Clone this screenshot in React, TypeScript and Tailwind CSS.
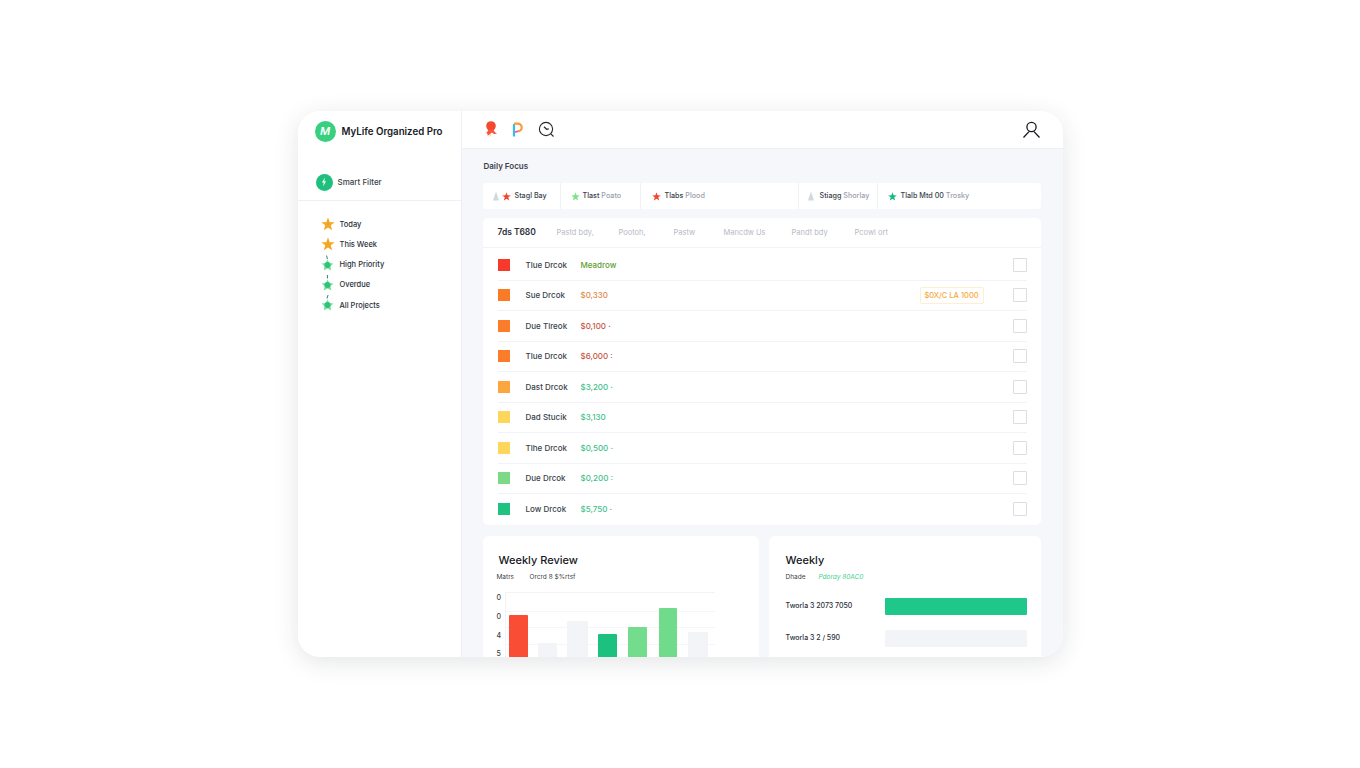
import React from "react";

const Star = ({ size = 14, color = "#f5a623", className = "" }: { size?: number; color?: string; className?: string }) => (
  <svg width={size} height={size} viewBox="0 0 24 24" className={`shrink-0 ${className}`}>
    <path d="M12 0.5l2.9 8.3 8.6.3-6.8 5.2 2.4 8.4L12 17.8l-7.1 4.9 2.4-8.4L.5 9.1l8.6-.3z" fill={color} />
  </svg>
);

const PinStar = ({ d }: { d: string }) => (
  <svg width="13" height="20" viewBox="0 0 13 20" className="shrink-0">
    <path d={d} stroke="#1f8f66" strokeWidth="1" fill="none" />
    <path d="M6.5 4.5l1.8 3.4 4.2.5-3 2.9.8 4.2-3.8-2-3.8 2 .8-4.2-3-2.9 4.2-.5z" fill="#7fe3a0" />
    <circle cx="6.5" cy="10" r="3" fill="#2fc27a" />
  </svg>
);

const TinyTower = () => (
  <svg width="8" height="10" viewBox="0 0 8 10" className="shrink-0">
    <path d="M4 0.5 L7 9.5 H1 Z" fill="#cfdadf" />
  </svg>
);

const nav = [
  { icon: "star", label: "Today", d: "" },
  { icon: "star", label: "This Week", d: "" },
  { icon: "pin", label: "High Priority", d: "M5.6 0.5L6.4 4" },
  { icon: "pin", label: "Overdue", d: "M6.4 -0.5V3.5" },
  { icon: "pin", label: "All Projects", d: "M7.2 -0.5L6 3.5" },
];

const rows = [
  { c: "#f6392b", name: "Tlue Drcok", val: "Meadrow", vc: "text-[#5f9e33]", tail: "" },
  { c: "#fb7a26", name: "Sue Drcok", val: "$0,330", vc: "text-[#e08a4a]", tail: "", badge: true },
  { c: "#fb7d2a", name: "Due Tlreok", val: "$0,100", vc: "text-[#c4553f]", tail: "·" },
  { c: "#fb7d2a", name: "Tlue Drcok", val: "$6,000", vc: "text-[#c4553f]", tail: ":" },
  { c: "#fca63f", name: "Dast Drcok", val: "$3,200", vc: "text-[#3fbf8a]", tail: "·" },
  { c: "#fdd65c", name: "Dad Stucik", val: "$3,130", vc: "text-[#3fbf8a]", tail: "" },
  { c: "#fdd65c", name: "Tlhe Drcok", val: "$0,500", vc: "text-[#3fbf8a]", tail: "·" },
  { c: "#7ed987", name: "Due Drcok", val: "$0,200", vc: "text-[#3fbf8a]", tail: ":" },
  { c: "#20c27f", name: "Low Drcok", val: "$5,750", vc: "text-[#3fbf8a]", tail: "·" },
];

const bars = [
  { c: "bg-[#f94d35]", w: "w-[19px]", ml: "ml-[3px]", mt: "mt-[22px]" },
  { c: "bg-[#f3f4f7]", w: "w-[19px]", ml: "ml-[10px]", mt: "mt-[50px]" },
  { c: "bg-[#f3f4f7]", w: "w-[21px]", ml: "ml-[10px]", mt: "mt-[28px]" },
  { c: "bg-[#1cc180]", w: "w-[19px]", ml: "ml-[10px]", mt: "mt-[41px]" },
  { c: "bg-[#74dd8d]", w: "w-[19px]", ml: "ml-[11px]", mt: "mt-[34px]" },
  { c: "bg-[#70db8b]", w: "w-[18px]", ml: "ml-[12px]", mt: "mt-[15px]" },
  { c: "bg-[#f3f4f7]", w: "w-[20px]", ml: "ml-[11px]", mt: "mt-[39px]" },
];

export default function App() {
  return (
    <div className="h-screen w-full bg-white flex items-center justify-center font-['Inter','Liberation_Sans',sans-serif] overflow-hidden">
      <div className="w-[765px] h-[546px] rounded-[22px] bg-white shadow-[0_5px_24px_rgba(30,40,60,0.12)] overflow-hidden flex">
        <aside className="w-[164px] shrink-0 border-r border-[#eef0f3] bg-white flex flex-col">
          <div className="h-[38px] mt-[2px] pl-[17px] flex items-center gap-[5px]">
            <div className="w-[21px] h-[21px] rounded-full bg-[#38cf7e] flex items-center justify-center shrink-0 -mt-[2px]">
              <span className="text-white text-[11px] font-semibold italic leading-none">M</span>
            </div>
            <span className="ml-[1px] text-[9.7px] font-semibold text-[#17191f] whitespace-nowrap">MyLife Organized Pro</span>
          </div>
          <div className="h-[37px] mt-[13px] pl-[18px] flex items-center gap-[5px] border-b border-[#eef0f3]">
            <div className="w-[17px] h-[17px] rounded-full bg-[#1fc07d] flex items-center justify-center shrink-0">
              <svg width="6" height="10" viewBox="0 0 6 10"><path d="M3.8 0.5L1 5.6h1.7L2.2 9.5 5 4.2H3.2z" fill="#fff" /></svg>
            </div>
            <span className="text-[8px] font-medium text-[#3a3f4a] whitespace-nowrap">Smart Filter</span>
          </div>
          <nav className="pt-[13px] pl-[23px] flex flex-col">
            {nav.map((n) => (
              <div key={n.label} className="h-[20.3px] flex items-center gap-[5px]">
                <div className="w-[14px] flex justify-center shrink-0">
                  {n.icon === "star" ? <Star size={14} /> : <PinStar d={n.d} />}
                </div>
                <span className="text-[7.5px] font-medium text-[#2c303a] whitespace-nowrap">{n.label}</span>
              </div>
            ))}
          </nav>
        </aside>

        <div className="flex-1 min-w-0 flex flex-col bg-[#f6f7fa]">
          <header className="h-[38px] shrink-0 bg-white border-b border-[#eef0f3] flex items-center pl-[22px] pr-[22px]">
            <div className="flex items-center gap-[14px]">
              <svg width="14" height="17" viewBox="0 0 14 17">
                <circle cx="7" cy="5" r="4.8" fill="#f4482f" />
                <path d="M4.5 8.5h5c.4 1.6 1.6 3 3.5 4.2l-3 .3-2.2-1.4-1.3 1.2-2.7 2-.8-3L1 12.8c1.8-1.2 3-2.6 3.5-4.3z" fill="#f4573c" />
                <path d="M5.5 15.5l1.5-2.2" stroke="#f9b090" strokeWidth="0.8" />
              </svg>
              <svg width="12" height="15" viewBox="0 0 12 15">
                <path d="M2 14.5V2" stroke="#35bde8" strokeWidth="2.2" fill="none" />
                <path d="M2 1.6h3.8a3.9 3.9 0 0 1 0 7.8" stroke="#f99a3d" strokeWidth="2.2" fill="none" />
                <path d="M3 10.2c1-.6 1.8-.8 3-.8" stroke="#ec5aa5" strokeWidth="1.8" fill="none" />
              </svg>
              <svg width="17" height="17" viewBox="0 0 17 17" fill="none" stroke="#25282e" strokeWidth="1.1">
                <circle cx="8" cy="8" r="6.6" />
                <path d="M12.8 12.8L15.5 15.5" />
                <path d="M6 5.8l2.6 2.5 2.2-.5" strokeWidth="1.2" />
              </svg>
            </div>
            <svg width="19" height="18" viewBox="0 0 19 18" fill="none" stroke="#15171c" strokeWidth="1.3" className="ml-auto">
              <circle cx="9.5" cy="6" r="4.6" />
              <path d="M1.5 16.5L7 10.6M17.5 16.5L12 10.6" />
            </svg>
          </header>

          <main className="flex-1 min-h-0 pl-[21px] pr-[22px] overflow-hidden">
            <h2 className="ml-[1px] text-[8px] font-semibold text-[#3a3f4a] mt-[12px] leading-[10px]">Daily Focus</h2>
            <div className="mt-[12px] h-[26px] rounded-[4px] bg-white flex items-center text-[7.2px] font-medium">
              <div className="w-[78px] h-full border-r border-[#f0f1f4] flex items-center pl-[9px] gap-[2px]">
                <TinyTower />
                <Star size={9} color="#f2452f" />
                <span className="ml-[2px] text-[#3a3f4a] whitespace-nowrap">Stagl Bay</span>
              </div>
              <div className="w-[80px] h-full border-r border-[#f0f1f4] flex items-center pl-[10px] gap-[3px]">
                <Star size={9} color="#7fe08a" />
                <span className="text-[#3a3f4a] whitespace-nowrap">Tlast <span className="text-[#9aa0ad]">Poato</span></span>
              </div>
              <div className="w-[158px] h-full border-r border-[#f0f1f4] flex items-center pl-[11px] gap-[4px]">
                <Star size={9} color="#f2452f" />
                <span className="text-[#3a3f4a] whitespace-nowrap">Tlabs <span className="text-[#9aa0ad]">Plood</span></span>
              </div>
              <div className="w-[79px] h-full border-r border-[#f0f1f4] flex items-center pl-[8px] gap-[5px]">
                <TinyTower />
                <span className="text-[#3a3f4a] whitespace-nowrap">Stiagg <span className="text-[#9aa0ad]">Shorlay</span></span>
              </div>
              <div className="flex-1 h-full flex items-center pl-[10px] gap-[4px]">
                <Star size={9} color="#13b981" />
                <span className="text-[#3a3f4a] whitespace-nowrap">Tlalb Mtd 00 <span className="text-[#9aa0ad]">Trosky</span></span>
              </div>
            </div>

            <section className="mt-[9px] h-[307px] rounded-[5px] bg-white">
              <div className="h-[30px] border-b border-[#f2f3f6] flex items-center pl-[15px] text-[7.5px] text-[#b6bac4] whitespace-nowrap">
                <span className="w-[59px] text-[8.5px] font-semibold text-[#2c303a]">7ds T680</span>
                <span className="w-[62px]">Pastd bdy,</span>
                <span className="w-[55px]">Pootoh,</span>
                <span className="w-[50px]">Pastw</span>
                <span className="w-[68px]">Mancdw Us</span>
                <span className="w-[63px]">Pandt bdy</span>
                <span>Pcowl ort</span>
              </div>
              <div className="pt-[2px]">
                {rows.map((r, i) => (
                  <div key={i} className={`h-[30.5px] ml-[15px] mr-[14px] flex items-center ${i < rows.length - 1 ? "border-b border-[#f2f3f6]" : ""}`}>
                    <div className="w-[12px] h-[12px] shrink-0" style={{ backgroundColor: r.c }} />
                    <span className="ml-[16px] w-[48px] text-[8px] font-medium text-[#3a3f4a] whitespace-nowrap">{r.name}</span>
                    <span className={`ml-[7px] text-[8px] font-medium ${r.vc} whitespace-nowrap`}>{r.val} {r.tail}</span>
                    {r.badge && (
                      <span className="ml-auto mr-[29px] w-[64px] h-[17px] border border-[#fcefd2] rounded-[2px] text-[7.5px] font-medium text-[#f5a93a] flex items-center justify-center whitespace-nowrap">$0X/C LA 1000</span>
                    )}
                    <div className={`${r.badge ? "" : "ml-auto"} w-[14px] h-[14px] border border-[#dcdee2] rounded-[1px] shrink-0`} />
                  </div>
                ))}
              </div>
            </section>

            <div className="mt-[11px] flex gap-[10px]">
              <section className="w-[276px] h-[140px] rounded-[6px] bg-white pl-[16px] pt-[16px]">
                <h3 className="text-[11px] font-medium text-[#17191f] leading-[16px]">Weekly Review</h3>
                <div className="mt-[5px] -ml-[2px] flex text-[6.5px] text-[#3a3f4a] leading-[9px] whitespace-nowrap">
                  <span className="w-[33px]">Matrs</span>
                  <span>Orcrd 8 $%rtsf</span>
                </div>
                <div className="mt-[10px] flex">
                  <div className="w-[6px] -ml-[2px] flex flex-col text-[7px] font-medium text-[#3a3f4a] leading-[19px] -mt-[4px]">
                    <span>0</span><span>0</span><span>4</span>
                    <span className="leading-[6px] mt-[6px]">5</span>
                  </div>
                  <div className="relative ml-[2px] w-[210px] h-[70px] border-t border-l border-[#f4f2f7]">
                    <div className="absolute inset-x-0 top-[18px] border-t border-[#f6f6f8]" />
                    <div className="absolute inset-x-0 top-[34px] border-t border-[#f6f6f8]" />
                    <div className="absolute inset-x-0 top-[51px] border-t border-[#f6f6f8]" />
                    <div className="relative flex items-start">
                      {bars.map((b, i) => (
                        <div key={i} className={`${b.w} ${b.ml} ${b.mt} ${b.c} h-[60px] rounded-t-[1px]`} />
                      ))}
                    </div>
                  </div>
                </div>
              </section>
              <section className="flex-1 h-[140px] rounded-[6px] bg-white pl-[17px] pr-[14px] pt-[16px]">
                <h3 className="text-[11px] font-medium text-[#17191f] leading-[16px]">Weekly</h3>
                <div className="mt-[5px] flex text-[6.5px] leading-[9px] whitespace-nowrap">
                  <span className="w-[33px] text-[#3a3f4a]">Dhade</span>
                  <span className="text-[#3fd18f] italic">Pdoray 80AC0</span>
                </div>
                <div className="mt-[16px] flex items-center h-[17px]">
                  <span className="w-[99px] text-[7px] font-medium text-[#2c303a] whitespace-nowrap">Tworla 3 2073 7050</span>
                  <div className="flex-1 h-[17px] rounded-[1px] bg-[#1fc78a]" />
                </div>
                <div className="mt-[15px] flex items-center h-[17px]">
                  <span className="w-[99px] text-[7px] font-medium text-[#2c303a] whitespace-nowrap">Tworla 3 2 / 590</span>
                  <div className="flex-1 h-[17px] rounded-[1px] bg-[#f3f4f7]" />
                </div>
              </section>
            </div>
          </main>
        </div>
      </div>
    </div>
  );
}
